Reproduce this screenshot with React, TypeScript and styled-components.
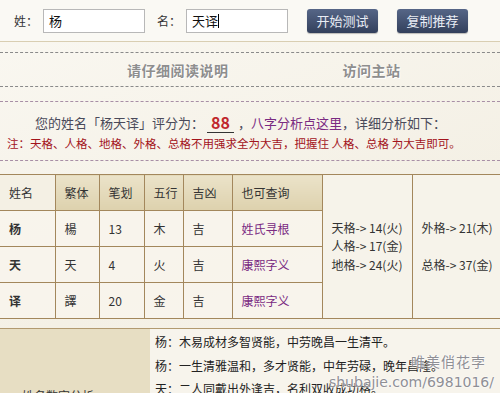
import React from "react";
import styled, { createGlobalStyle } from "styled-components";

const GlobalStyle = createGlobalStyle`
  body {
    margin: 0;
    background: #f7f4ec;
    font-family: "Noto Sans CJK SC", "Noto Sans", sans-serif;
    color: #333;
    overflow: hidden;
  }
`;

const Page = styled.div`
  position: relative;
  width: 500px;
  height: 393px;
  overflow: hidden;
  background: linear-gradient(160deg, #faf8f2 0%, #f4f0e5 60%, #f7f4ec 100%);
`;

const TopBar = styled.div`
  height: 42px;
  display: flex;
  align-items: center;
  padding-left: 14px;
  border-bottom: 1px solid #d9ceb2;
  background: #faf9f4;
  box-sizing: border-box;
`;

const Label = styled.span<{ $gap?: number }>`
  font-size: 12px;
  color: #333;
  width: 29px;
  margin-left: ${(p) => p.$gap || 0}px;
`;

const NameInput = styled.div`
  width: 102px;
  height: 24px;
  box-sizing: border-box;
  border: 1px solid #b8b8b8;
  background: #fff;
  font-size: 13px;
  line-height: 22px;
  padding-left: 5px;
  color: #111;
`;

const Caret = styled.span`
  display: inline-block;
  width: 1px;
  height: 14px;
  background: #000;
  vertical-align: -2px;
`;

const Button = styled.div<{ $gap: number }>`
  width: 71px;
  height: 24px;
  margin-left: ${(p) => p.$gap}px;
  border-radius: 3px;
  background: linear-gradient(#566687, #33405c);
  color: #e9edf5;
  font-size: 13px;
  line-height: 24px;
  text-align: center;
  box-shadow: 0 1px 1px rgba(0, 0, 0, 0.25);
`;

const DashedBox = styled.div<{ $color: string; $top: number }>`
  margin-top: ${(p) => p.$top}px;
  border-top: 1px dashed ${(p) => p.$color};
  border-bottom: 1px dashed ${(p) => p.$color};
`;

const LinkRow = styled.div`
  height: 33px;
  display: flex;
  align-items: center;
`;

const GrayLink = styled.span<{ $left: number }>`
  margin-left: ${(p) => p.$left}px;
  font-size: 14px;
  font-weight: bold;
  color: #8e8e8e;
  letter-spacing: 0.5px;
  text-shadow: 1px 1px 0 #fff;
`;

const ScoreBox = styled.div`
  height: 58px;
  display: flex;
  flex-direction: column;
  justify-content: center;
`;

const ScoreLine = styled.div`
  padding-left: 35px;
  font-size: 13px;
  color: #4a4a5a;
  height: 22px;
  display: flex;
  align-items: center;
  white-space: nowrap;
`;

const Score = styled.span`
  display: inline-block;
  width: 27px;
  border-bottom: 1px solid #333;
  color: #c0272d;
  font-size: 16px;
  font-weight: bold;
  text-align: center;
  line-height: 20px;
  margin: 0 4px 0 3px;
`;

const Purple = styled.span`
  color: #7a2a82;
`;

const Note = styled.div`
  padding-left: 7px;
  font-size: 11.5px;
  color: #a3141c;
  margin-top: 1px;
  white-space: nowrap;
`;

const Table = styled.table`
  margin-top: 13px;
  width: 500px;
  border-collapse: collapse;
  table-layout: fixed;
  font-size: 12px;
  color: #333;
  border-top: 1px solid #a3875c;
  border-bottom: 1px solid #a3875c;
`;

const Th = styled.th<{ $light?: boolean }>`
  height: 35px;
  padding: 0 0 0 9px;
  text-align: left;
  font-weight: normal;
  border: 1px solid #a3875c;
  background: ${(p) =>
    p.$light ? "#f4f0e4" : "linear-gradient(#ebe3c9, #ddd1ad)"};
  &:first-child {
    border-left: none;
  }
`;

const Td = styled.td<{ $bold?: boolean; $purple?: boolean }>`
  height: 35px;
  padding: 0 0 0 9px;
  border: 1px solid #a3875c;
  background: rgba(248, 245, 236, 0.85);
  font-weight: ${(p) => (p.$bold ? "bold" : "normal")};
  color: ${(p) => (p.$purple ? "#7a2a82" : "#333")};
  &:first-child {
    border-left: none;
  }
`;

const GeCell = styled.td<{ $last?: boolean }>`
  padding: 0 0 0 9px;
  border: 1px solid #a3875c;
  border-right: ${(p) => (p.$last ? "none" : "1px solid #a3875c")};
  background: #f6f3ea;
  vertical-align: middle;
  line-height: 18.5px;
  white-space: nowrap;
`;

const Analysis = styled.div`
  margin-top: 9px;
  display: grid;
  grid-template-columns: 150px 1fr;
  border-top: 1px solid #b29a70;
  height: 80px;
`;

const AnalysisLabel = styled.div`
  background: #e7dec3;
  font-size: 12px;
  padding: 58px 0 0 22px;
  color: #333;
`;

const AnalysisText = styled.div`
  padding: 1px 0 0 5px;
  font-size: 12px;
  color: #222;
  background: #f7f4ec;
`;

const AnalysisLine = styled.div`
  height: 23.5px;
  line-height: 23px;
  white-space: nowrap;
`;

const Watermark = styled.div`
  position: absolute;
  right: 6px;
  bottom: 0;
  text-align: right;
  color: #8f8f95;
  font-size: 14px;
  line-height: 21px;
  text-shadow: 0 0 2px #fff, 0 0 2px #fff;
  font-family: "DejaVu Sans", "Noto Sans CJK SC", sans-serif;
`;

const WatermarkName = styled.div`
  padding-right: 8px;
  font-family: "Noto Sans CJK SC", sans-serif;
  letter-spacing: 1px;
`;

const rows = [
  { name: "杨", trad: "楊", strokes: "13", wx: "木", jx: "吉", link: "姓氏寻根" },
  { name: "天", trad: "天", strokes: "4", wx: "火", jx: "吉", link: "康熙字义" },
  { name: "译", trad: "譯", strokes: "20", wx: "金", jx: "吉", link: "康熙字义" },
];

export default function App() {
  return (
    <Page>
      <GlobalStyle />
      <TopBar>
        <Label>姓：</Label>
        <NameInput>杨</NameInput>
        <Label $gap={12}>名：</Label>
        <NameInput>
          天译
          <Caret />
        </NameInput>
        <Button $gap={19}>开始测试</Button>
        <Button $gap={19}>复制推荐</Button>
      </TopBar>

      <DashedBox $color="#8a8a8a" $top={10}>
        <LinkRow>
          <GrayLink $left={127}>请仔细阅读说明</GrayLink>
          <GrayLink $left={114}>访问主站</GrayLink>
        </LinkRow>
      </DashedBox>

      <DashedBox $color="#a88fa6" $top={14}>
        <ScoreBox>
          <ScoreLine>
            您的姓名「杨天译」评分为：<Score>88</Score>，
            <Purple>八字分析点这里</Purple>，详细分析如下：
          </ScoreLine>
          <Note>
            注：天格、人格、地格、外格、总格不用强求全为大吉，把握住 人格、总格 为大吉即可。
          </Note>
        </ScoreBox>
      </DashedBox>

      <Table>
        <colgroup>
          <col style={{ width: 55 }} />
          <col style={{ width: 44 }} />
          <col style={{ width: 45 }} />
          <col style={{ width: 39 }} />
          <col style={{ width: 49 }} />
          <col style={{ width: 90 }} />
          <col style={{ width: 90 }} />
          <col style={{ width: 88 }} />
        </colgroup>
        <tbody>
          <tr>
            <Th $light>姓名</Th>
            <Th>繁体</Th>
            <Th>笔划</Th>
            <Th>五行</Th>
            <Th>吉凶</Th>
            <Th>也可查询</Th>
            <GeCell rowSpan={4}>
              天格-&gt; 14(火)
              <br />
              人格-&gt; 17(金)
              <br />
              地格-&gt; 24(火)
            </GeCell>
            <GeCell rowSpan={4} $last>
              外格-&gt; 21(木)
              <br />
              &nbsp;
              <br />
              总格-&gt; 37(金)
            </GeCell>
          </tr>
          {rows.map((r) => (
            <tr key={r.name}>
              <Td $bold>{r.name}</Td>
              <Td>{r.trad}</Td>
              <Td>{r.strokes}</Td>
              <Td>{r.wx}</Td>
              <Td>{r.jx}</Td>
              <Td $purple>{r.link}</Td>
            </tr>
          ))}
        </tbody>
      </Table>

      <Analysis>
        <AnalysisLabel>姓名数字分析</AnalysisLabel>
        <AnalysisText>
          <AnalysisLine>杨：木易成材多智贤能，中劳晚昌一生清平。</AnalysisLine>
          <AnalysisLine>杨：一生清雅温和，多才贤能，中年劳碌，晚年昌隆。</AnalysisLine>
          <AnalysisLine>天：二人同戴出外逢吉，名利双收成功格。</AnalysisLine>
        </AnalysisText>
      </Analysis>

      <Watermark>
        <WatermarkName>唯美俏花孛</WatermarkName>
        <div>shubajie.com/6981016/</div>
      </Watermark>
    </Page>
  );
}
